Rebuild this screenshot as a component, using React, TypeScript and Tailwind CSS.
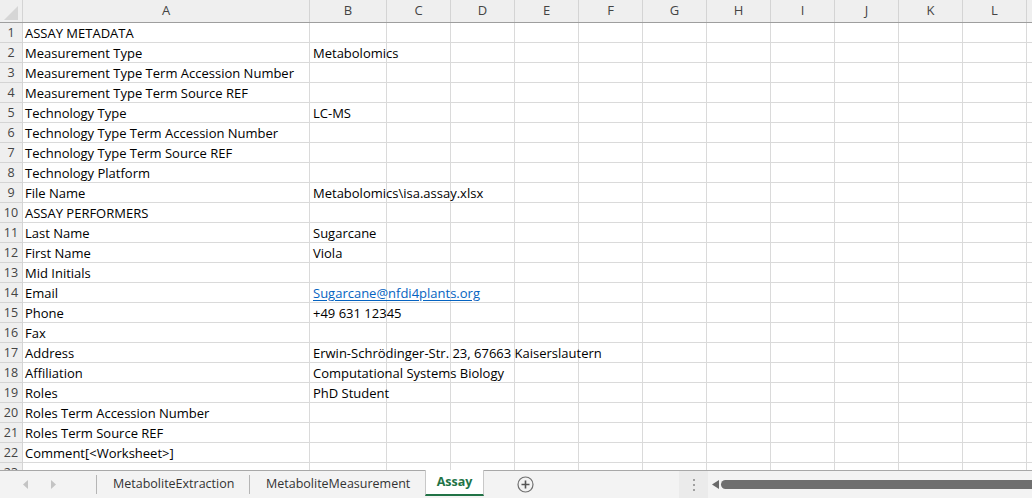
import React from 'react'

const cols = [
  { k: 'A', w: 'w-[287px]' },
  { k: 'B', w: 'w-[77px]' },
  { k: 'C', w: 'w-[64px]' },
  { k: 'D', w: 'w-[64px]' },
  { k: 'E', w: 'w-[64px]' },
  { k: 'F', w: 'w-[64px]' },
  { k: 'G', w: 'w-[64px]' },
  { k: 'H', w: 'w-[64px]' },
  { k: 'I', w: 'w-[64px]' },
  { k: 'J', w: 'w-[64px]' },
  { k: 'K', w: 'w-[64px]' },
  { k: 'L', w: 'w-[64px]' },
  { k: 'M', w: 'w-[64px]' },
]

const rows: [string, string][] = [
  ['ASSAY METADATA', ''],
  ['Measurement Type', 'Metabolomics'],
  ['Measurement Type Term Accession Number', ''],
  ['Measurement Type Term Source REF', ''],
  ['Technology Type', 'LC-MS'],
  ['Technology Type Term Accession Number', ''],
  ['Technology Type Term Source REF', ''],
  ['Technology Platform', ''],
  ['File Name', 'Metabolomics\\isa.assay.xlsx'],
  ['ASSAY PERFORMERS', ''],
  ['Last Name', 'Sugarcane'],
  ['First Name', 'Viola'],
  ['Mid Initials', ''],
  ['Email', 'Sugarcane@nfdi4plants.org'],
  ['Phone', '+49 631 12345'],
  ['Fax', ''],
  ['Address', 'Erwin-Schrödinger-Str. 23, 67663 Kaiserslautern'],
  ['Affiliation', 'Computational Systems Biology'],
  ['Roles', 'PhD Student'],
  ['Roles Term Accession Number', ''],
  ['Roles Term Source REF', ''],
  ['Comment[<Worksheet>]', ''],
  ['', ''],
]

export default function App() {
  return (
    <div className="w-[1032px] h-[498px] overflow-hidden bg-white flex flex-col font-['Open_Sans',sans-serif]">
      {/* Grid */}
      <div className="h-[470px] overflow-hidden shrink-0">
        {/* Column header */}
        <div className="flex h-[23px] bg-[#efefef] border-b border-[#9e9e9e] text-[13px] text-[#444]">
          <div className="w-[23px] shrink-0 border-r border-[#d4d4d4] relative">
            <svg className="absolute right-[4px] bottom-[2px]" width="14" height="14" viewBox="0 0 14 14">
              <path d="M14 0 L14 14 L0 14 Z" fill="#d6d6d6" />
            </svg>
          </div>
          {cols.map((c) => (
            <div key={c.k} className={`${c.w} shrink-0 border-r border-[#d4d4d4] flex items-center justify-center`}>
              {c.k}
            </div>
          ))}
        </div>

        {rows.map(([a, b], i) => (
          <div key={i} className="flex h-[20px] text-[13px] text-black">
            <div className="w-[23px] shrink-0 bg-[#efefef] border-r border-b border-[#d4d4d4] flex items-center justify-center text-[12.5px] text-[#444] pt-[2px]">
              {i + 1}
            </div>
            {cols.map((c, j) => (
              <div key={c.k} className={`${c.w} shrink-0 border-r border-b border-[#dadada] flex items-center whitespace-nowrap overflow-visible pt-[2px]`}>
                {j === 0 && <span className="pl-[2px]">{a}</span>}
                {j === 1 && b && (
                  <span
                    className={`pl-[3px] relative z-10 ${
                      b.includes('@') ? 'text-[#0563c1] underline underline-offset-2' : ''
                    }`}
                  >
                    {b}
                  </span>
                )}
              </div>
            ))}
          </div>
        ))}
      </div>

      {/* Sheet tabs */}
      <div className="h-[28px] shrink-0 border-t border-[#a8a8a8] bg-[#f3f3f3] flex items-stretch text-[12.5px] text-[#333]">
        <div className="w-[97px] shrink-0 flex items-center gap-[21px] pl-[23px] border-r border-[#b5b5b5] my-[4px]">
          <svg width="6" height="9" viewBox="0 0 6 9"><path d="M5 0 L0 4.5 L5 9 Z" fill="#c4c4c4" /></svg>
          <svg width="6" height="9" viewBox="0 0 6 9"><path d="M1 0 L6 4.5 L1 9 Z" fill="#c4c4c4" /></svg>
        </div>
        <div className="w-[153px] shrink-0 flex items-center pl-[16px] border-r border-[#b5b5b5] my-[4px] whitespace-nowrap">MetaboliteExtraction</div>
        <div className="w-[175px] shrink-0 flex items-center pl-[16px] whitespace-nowrap">MetaboliteMeasurement</div>
        <div className="w-[59px] shrink-0 bg-white flex items-center justify-center font-bold text-[#217346] border-b-[2px] border-[#217346] border-x border-x-[#c8c8c8] -mt-px mb-[2px] pt-[1px]">
          Assay
        </div>
        <div className="w-[82px] shrink-0 flex items-center justify-center">
          <svg width="17" height="17" viewBox="0 0 17 17">
            <circle cx="8.5" cy="8.5" r="7.5" fill="none" stroke="#707070" strokeWidth="1.2" />
            <path d="M8.5 4.5 V12.5 M4.5 8.5 H12.5" stroke="#555" strokeWidth="1.6" />
          </svg>
        </div>
        <div className="w-[113px] shrink-0" />
        <div className="w-[29px] shrink-0 bg-[#ebebeb] flex flex-col items-center justify-center gap-[3px]">
          <span className="w-[2px] h-[2px] bg-[#a0a0a0]" />
          <span className="w-[2px] h-[2px] bg-[#a0a0a0]" />
          <span className="w-[2px] h-[2px] bg-[#a0a0a0]" />
        </div>
        <div className="flex-1 flex items-center pl-[4px]">
          <svg width="7" height="9" viewBox="0 0 7 9"><path d="M7 0 L0 4.5 L7 9 Z" fill="#6a6a6a" /></svg>
          <div className="ml-[2px] h-[9px] flex-1 rounded-l-full bg-[#6f6f6f]" />
        </div>
      </div>
    </div>
  )
}
